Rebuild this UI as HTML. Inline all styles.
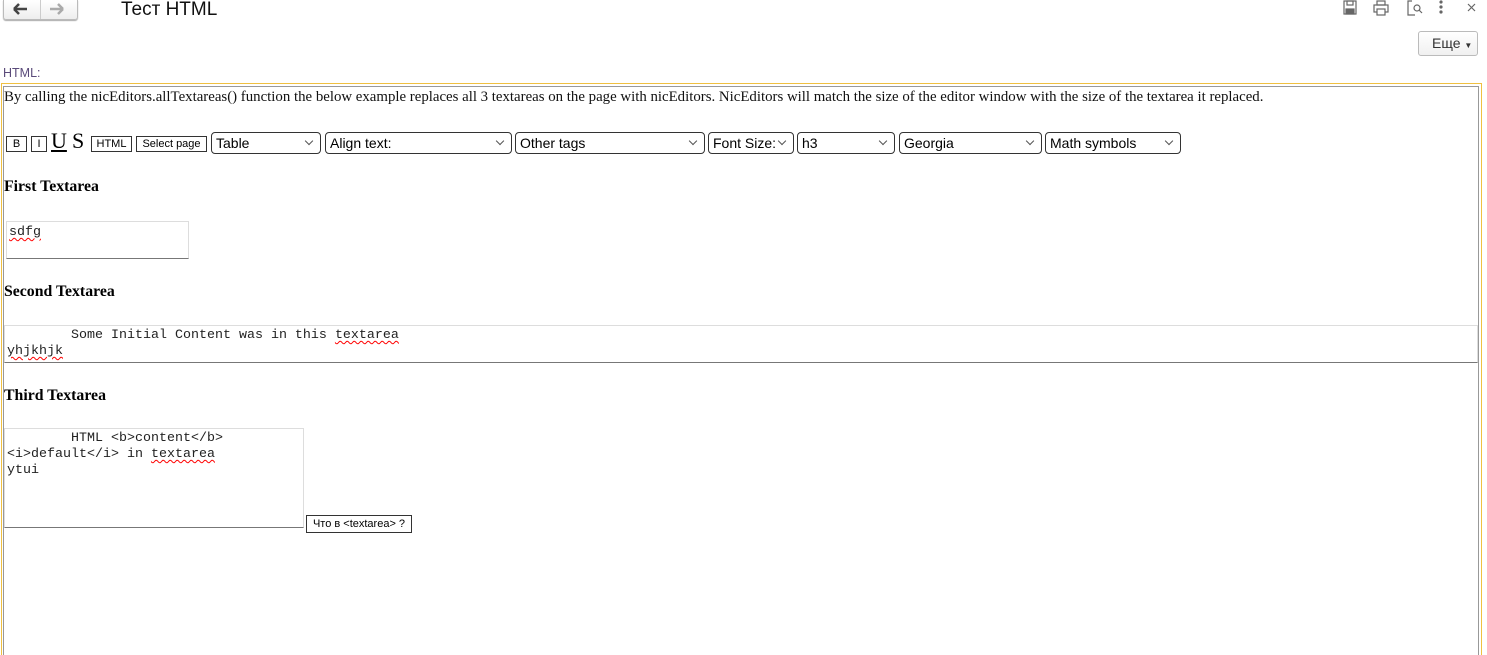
<!DOCTYPE html>
<html><head><meta charset="utf-8"><style>
html,body{margin:0;width:1487px;height:655px;overflow:hidden}
body{background:#fff;position:relative;font-family:"Liberation Sans",sans-serif}
.a{position:absolute}
.serif{font-family:"Liberation Serif",serif}
.mono{font-family:"Liberation Mono",monospace;font-size:13.33px;color:#222}
.sel{position:absolute;top:132px;border:1px solid #333;border-radius:4px;font-size:14px;line-height:20px;padding-left:4px;box-sizing:border-box;height:22px}
.sel:after{content:"";position:absolute;right:8px;top:5px;width:5px;height:5px;border-right:1px solid #555;border-bottom:1px solid #555;transform:rotate(45deg)}
.btn{position:absolute;top:136px;height:16px;border:1px solid #333;font-size:11px;line-height:15px;text-align:center;box-sizing:border-box}
.ta{position:absolute;border:1px solid #ddd;border-bottom:1px solid #777;box-sizing:border-box}
h3{margin:0;position:absolute;font-family:"Liberation Serif",serif;font-size:15.8px;font-weight:bold}
.sq{text-decoration:underline wavy red;text-decoration-thickness:1px;text-underline-offset:2px}
</style></head><body>
<div class="a" style="left:3px;top:0;width:73px;height:19px;border:1px solid #bbb;border-top:none;border-radius:0 0 3px 3px;box-shadow:0 1px 1px #aaa;background:linear-gradient(#fff,#eee)">
<div class="a" style="left:36px;top:0;width:1px;height:19px;background:#ccc"></div>
</div>
<svg class="a" style="left:10px;top:2px" width="60" height="14"><path d="M4 7H17M4 7L9 2M4 7L9 12" stroke="#444" stroke-width="2.5" fill="none"/><path d="M40 7H53M53 7L48 2M53 7L48 12" stroke="#aaa" stroke-width="2.5" fill="none"/></svg>
<div class="a" style="left:121px;top:-1px;font-size:19px;color:#111">Тест HTML</div>
<svg class="a" style="left:1340px;top:0" width="140" height="16" fill="none" stroke="#666" stroke-width="1.2">
<rect x="4" y="1" width="12" height="13"/><rect x="7" y="1" width="6" height="4"/><rect x="6" y="9" width="8" height="5" fill="#666"/>
<rect x="37" y="1" width="8" height="4"/><rect x="34" y="5" width="14" height="7"/><rect x="37" y="9" width="8" height="6" fill="#fff"/>
<path d="M72 1H68V15H75"/><circle cx="77" cy="8" r="3"/><path d="M79 10L82 13"/>
<circle cx="101" cy="2" r="1" fill="#666"/><circle cx="101" cy="7" r="1" fill="#666"/><circle cx="101" cy="12" r="1" fill="#666"/>
<path d="M128 4L135 11M135 4L128 11"/></svg>
<div class="a" style="left:1418px;top:31px;width:60px;height:25px;border:1px solid #bbb;border-radius:3px;background:linear-gradient(#fff,#f0f0f0);box-sizing:border-box;font-size:14px;line-height:23px;padding-left:13px;color:#333">Еще <span style="font-size:8px">▼</span></div>
<div class="a" style="left:3px;top:66px;font-size:12.5px;color:#5a4a7a">HTML:</div>
<div class="a" style="left:1px;top:83px;width:1481px;height:590px;border:1px solid #f0c040;box-sizing:border-box"></div>
<div class="a" style="left:3px;top:86px;width:1476px;height:590px;border:1px solid #999;box-sizing:border-box"></div>
<div class="a serif" style="left:4px;top:89px;font-size:14.85px;color:#111;white-space:nowrap">By calling the nicEditors.allTextareas() function the below example replaces all 3 textareas on the page with nicEditors. NicEditors will match the size of the editor window with the size of the textarea it replaced.</div>
<div class="btn" style="left:6px;width:21px">B</div>
<div class="btn" style="left:31px;width:16px">I</div>
<div class="a serif" style="left:51px;top:128px;font-size:22px;text-decoration:underline">U</div>
<div class="a serif" style="left:72px;top:128px;font-size:22px">S</div>
<div class="btn" style="left:91px;width:41px">HTML</div>
<div class="btn" style="left:136px;width:71px">Select page</div>
<div class="sel" style="left:211px;width:110px">Table</div>
<div class="sel" style="left:325px;width:187px">Align text:</div>
<div class="sel" style="left:515px;width:190px">Other tags</div>
<div class="sel" style="left:708px;width:86px">Font Size:</div>
<div class="sel" style="left:797px;width:98px">h3</div>
<div class="sel" style="left:899px;width:143px">Georgia</div>
<div class="sel" style="left:1045px;width:136px">Math symbols</div>
<h3 style="left:4px;top:178px">First Textarea</h3>
<div class="ta" style="left:6px;top:221px;width:183px;height:38px"></div>
<div class="a mono" style="left:9px;top:225px"><span class="sq">sdfg</span></div>
<h3 style="left:4px;top:283px">Second Textarea</h3>
<div class="ta" style="left:4px;top:325px;width:1474px;height:38px"></div>
<div class="a mono" style="left:7px;top:328px;white-space:pre;line-height:16px">        Some Initial Content was in this <span class="sq">textarea</span>
<span class="sq">yhjkhjk</span></div>
<h3 style="left:4px;top:387px">Third Textarea</h3>
<div class="ta" style="left:4px;top:428px;width:300px;height:100px"></div>
<div class="a mono" style="left:7px;top:431px;white-space:pre;line-height:16px">        HTML &lt;b&gt;content&lt;/b&gt;
&lt;i&gt;default&lt;/i&gt; in <span class="sq">textarea</span>
ytui</div>
<div class="a" style="left:306px;top:515px;width:106px;height:18px;border:1px solid #333;box-sizing:border-box;font-size:11px;line-height:16px;text-align:center">Что в &lt;textarea&gt; ?</div>
</body></html>
